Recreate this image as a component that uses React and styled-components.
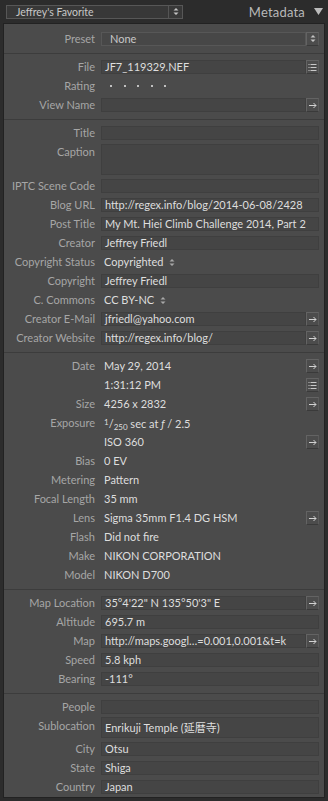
import React from "react";
import styled, { createGlobalStyle } from "styled-components";

const GlobalStyle = createGlobalStyle`
  html, body {
    margin: 0;
    padding: 0;
    background: #2c2c2c;
  }
  body {
    font-family: Lato, "Noto Sans CJK JP", sans-serif;
    width: 328px;
    height: 801px;
    overflow: hidden;
  }
`;

const sections = [
  [{ label: "Preset", kind: "select", value: "None" }],
  [
    { label: "File", kind: "box", value: "JF7_119329.NEF", btn: "list" },
    { label: "Rating", kind: "rating" },
    { label: "View Name", kind: "box", btn: "arrow" },
  ],
  [
    { label: "Title", kind: "box" },
    { label: "Caption", kind: "box", h: 34, boxH: 31 },
    { label: "IPTC Scene Code", kind: "box" },
    { label: "Blog URL", kind: "box", value: "http://regex.info/blog/2014-06-08/2428" },
    { label: "Post Title", kind: "box", value: "My Mt. Hiei Climb Challenge 2014, Part 2" },
    { label: "Creator", kind: "box", value: "Jeffrey Friedl" },
    { label: "Copyright Status", kind: "text", value: "Copyrighted", updown: true },
    { label: "Copyright", kind: "box", value: "Jeffrey Friedl" },
    { label: "C. Commons", kind: "text", value: "CC BY-NC", updown: true },
    { label: "Creator E-Mail", kind: "box", value: "jfriedl@yahoo.com", btn: "arrow" },
    { label: "Creator Website", kind: "box", value: "http://regex.info/blog/", btn: "arrow" },
  ],
  [
    { label: "Date", kind: "text", value: "May 29, 2014", btn: "arrow" },
    { label: "", kind: "text", value: "1:31:12 PM", btn: "list" },
    { label: "Size", kind: "text", value: "4256 x 2832", btn: "arrow" },
    { label: "Exposure", kind: "exposure" },
    { label: "", kind: "text", value: "ISO 360", btn: "arrow" },
    { label: "Bias", kind: "text", value: "0 EV" },
    { label: "Metering", kind: "text", value: "Pattern" },
    { label: "Focal Length", kind: "text", value: "35 mm" },
    { label: "Lens", kind: "text", value: "Sigma 35mm F1.4 DG HSM", btn: "arrow" },
    { label: "Flash", kind: "text", value: "Did not fire" },
    { label: "Make", kind: "text", value: "NIKON CORPORATION" },
    { label: "Model", kind: "text", value: "NIKON D700" },
  ],
  [
    { label: "Map Location", kind: "box", value: "35°4'22\" N 135°50'3\" E", btn: "arrow" },
    { label: "Altitude", kind: "box", value: "695.7 m" },
    { label: "Map", kind: "box", value: "http://maps.googl…=0.001,0.001&t=k", btn: "arrow" },
    { label: "Speed", kind: "box", value: "5.8 kph" },
    { label: "Bearing", kind: "box", value: "-111°" },
  ],
  [
    { label: "People", kind: "box" },
    { label: "Sublocation", kind: "box", value: "Enrikuji Temple (延暦寺)", h: 23, boxH: 21 },
    { label: "City", kind: "box", value: "Otsu" },
    { label: "State", kind: "box", value: "Shiga" },
    { label: "Country", kind: "box", value: "Japan" },
  ],
];

const ArrowIcon = () => (
  <svg width="11" height="12" viewBox="0 0 11 12">
    <path d="M2 6.5 H9 M6.5 4 L9 6.5 L6.5 9" stroke="#d2d2d2" strokeWidth="1" fill="none" />
  </svg>
);

const ListIcon = () => (
  <svg width="11" height="12" viewBox="0 0 11 12">
    <path
      d="M1.5 3.5 H2.5 M1.5 6.5 H2.5 M1.5 9.5 H2.5 M3.5 3.5 H9.5 M3.5 6.5 H9.5 M3.5 9.5 H9.5"
      stroke="#c8c8c8"
      strokeWidth="1"
      fill="none"
    />
  </svg>
);

const UpDownIcon = ({ color = "#c4c4c4" }) => (
  <svg width="6" height="9" viewBox="0 0 6 9">
    <path d="M0.5 3.5 L3 1 L5.5 3.5 Z M0.5 5.5 L3 8 L5.5 5.5 Z" fill={color} />
  </svg>
);

export default function App() {
  const renderValue = (row) => {
    if (row.kind === "select") {
      return (
        <Value>
          <Field $select>{row.value}</Field>
          <Button>
            <UpDownIcon />
          </Button>
        </Value>
      );
    }
    if (row.kind === "rating") {
      return (
        <Value>
          <Stars>
            {[0, 1, 2, 3, 4].map((i) => (
              <Dot key={i} />
            ))}
          </Stars>
        </Value>
      );
    }
    if (row.kind === "exposure") {
      return (
        <Value>
          <Plain>
            <Sup>1</Sup>/<Sub>250</Sub> sec at <Italic>ƒ</Italic> / 2.5
          </Plain>
        </Value>
      );
    }
    const button = row.btn && (
      <Button>{row.btn === "arrow" ? <ArrowIcon /> : <ListIcon />}</Button>
    );
    if (row.kind === "box") {
      return (
        <Value>
          <Field $h={row.boxH} $tall={!!row.boxH}>
            {row.value}
          </Field>
          {button}
        </Value>
      );
    }
    return (
      <Value>
        <Plain>
          {row.value}
          {row.updown && (
            <InlineIcon>
              <UpDownIcon color="#a8a8a8" />
            </InlineIcon>
          )}
        </Plain>
        {button}
      </Value>
    );
  };

  return (
    <>
      <GlobalStyle />
      <Header>
        <PresetMenu>
          <MenuText>Jeffrey's Favorite</MenuText>
          <MenuArrow>
            <UpDownIcon />
          </MenuArrow>
        </PresetMenu>
        <PanelTitle>Metadata</PanelTitle>
        <svg width="9" height="7" viewBox="0 0 9 7">
          <path d="M0 0 H9 L4.5 7 Z" fill="#bcbcbc" />
        </svg>
      </Header>
      <Panel>
        {sections.map((rows, si) => (
          <Section key={si} $first={si === 0} $last={si === sections.length - 1}>
            {rows.map((row, ri) => (
              <Row key={ri} $h={row.h}>
                <Label>{row.label}</Label>
                {renderValue(row)}
              </Row>
            ))}
          </Section>
        ))}
      </Panel>
    </>
  );
}

const Header = styled.div`
  height: 23px;
  display: flex;
  align-items: center;
  padding: 0 5px 0 6px;
  box-sizing: border-box;
`;
const PresetMenu = styled.div`
  width: 177px;
  height: 14px;
  box-sizing: border-box;
  border: 1px solid #575757;
  background: #383838;
  display: flex;
  align-items: center;
`;
const MenuText = styled.span`
  flex: 1;
  padding-left: 9px;
  font-size: 10.5px;
  color: #c8c8c8;
  line-height: 12px;
`;
const MenuArrow = styled.span`
  width: 13px;
  height: 12px;
  border-left: 1px solid #555;
  display: flex;
  align-items: center;
  justify-content: center;
`;
const PanelTitle = styled.span`
  margin-left: auto;
  margin-right: 9px;
  font-size: 13px;
  color: #b9b9b9;
  letter-spacing: 0.2px;
`;
const Panel = styled.div`
  margin: 0 3px;
  height: 775px;
  box-sizing: border-box;
  border: 1px solid #222;
  background: #4b4b4b;
`;
const Section = styled.div`
  padding: ${(p) => (p.$first ? "5px" : "3px")} 5px ${(p) => (p.$last ? "1px" : "5px")} 0;
  border-bottom: ${(p) => (p.$last ? "none" : "1px solid #3c3c3c")};
`;
const Row = styled.div`
  display: grid;
  grid-template-columns: 91px 1fr;
  column-gap: 6px;
  height: ${(p) => p.$h || 19}px;
`;
const Label = styled.div`
  text-align: right;
  font-size: 11px;
  line-height: 19px;
  color: #a6a6a6;
  white-space: nowrap;
`;
const Value = styled.div`
  display: flex;
  align-items: center;
  min-width: 0;
`;
const Field = styled.div`
  flex: 1;
  min-width: 0;
  height: ${(p) => p.$h || 14}px;
  box-sizing: border-box;
  border: 1px solid ${(p) => (p.$select ? "#575757" : "#3f3f3f")};
  background: ${(p) => (p.$select ? "#474747" : "#454545")};
  padding: ${(p) => (p.$tall ? "1px" : "0")} 0 0 ${(p) => (p.$select ? "8px" : "3px")};
  display: flex;
  align-items: ${(p) => (p.$tall ? "flex-start" : "center")};
  font-size: 11px;
  color: ${(p) => (p.$select ? "#c8c8c8" : "#dedede")};
  white-space: nowrap;
  overflow: hidden;
`;
const Plain = styled.div`
  flex: 1;
  padding-left: 3px;
  font-size: 11px;
  line-height: 19px;
  color: #dedede;
  white-space: nowrap;
`;
const Italic = styled.i`
  font-style: italic;
`;
const Sup = styled.span`
  font-size: 8px;
  vertical-align: 3px;
`;
const Sub = styled.span`
  font-size: 8px;
  vertical-align: -2px;
`;
const InlineIcon = styled.span`
  display: inline-block;
  margin-left: 6px;
  vertical-align: -1px;
`;
const Button = styled.div`
  width: 13px;
  height: 14px;
  box-sizing: border-box;
  border: 1px solid #636363;
  border-right-color: #5a5a5a;
  border-bottom-color: #3a3a3a;
  background: #4c4c4c;
  display: flex;
  align-items: center;
  justify-content: center;
  flex-shrink: 0;
`;
const Stars = styled.div`
  display: flex;
  gap: 11.5px;
  padding-left: 9px;
`;
const Dot = styled.span`
  width: 2px;
  height: 2px;
  background: #c0c0c0;
`;
